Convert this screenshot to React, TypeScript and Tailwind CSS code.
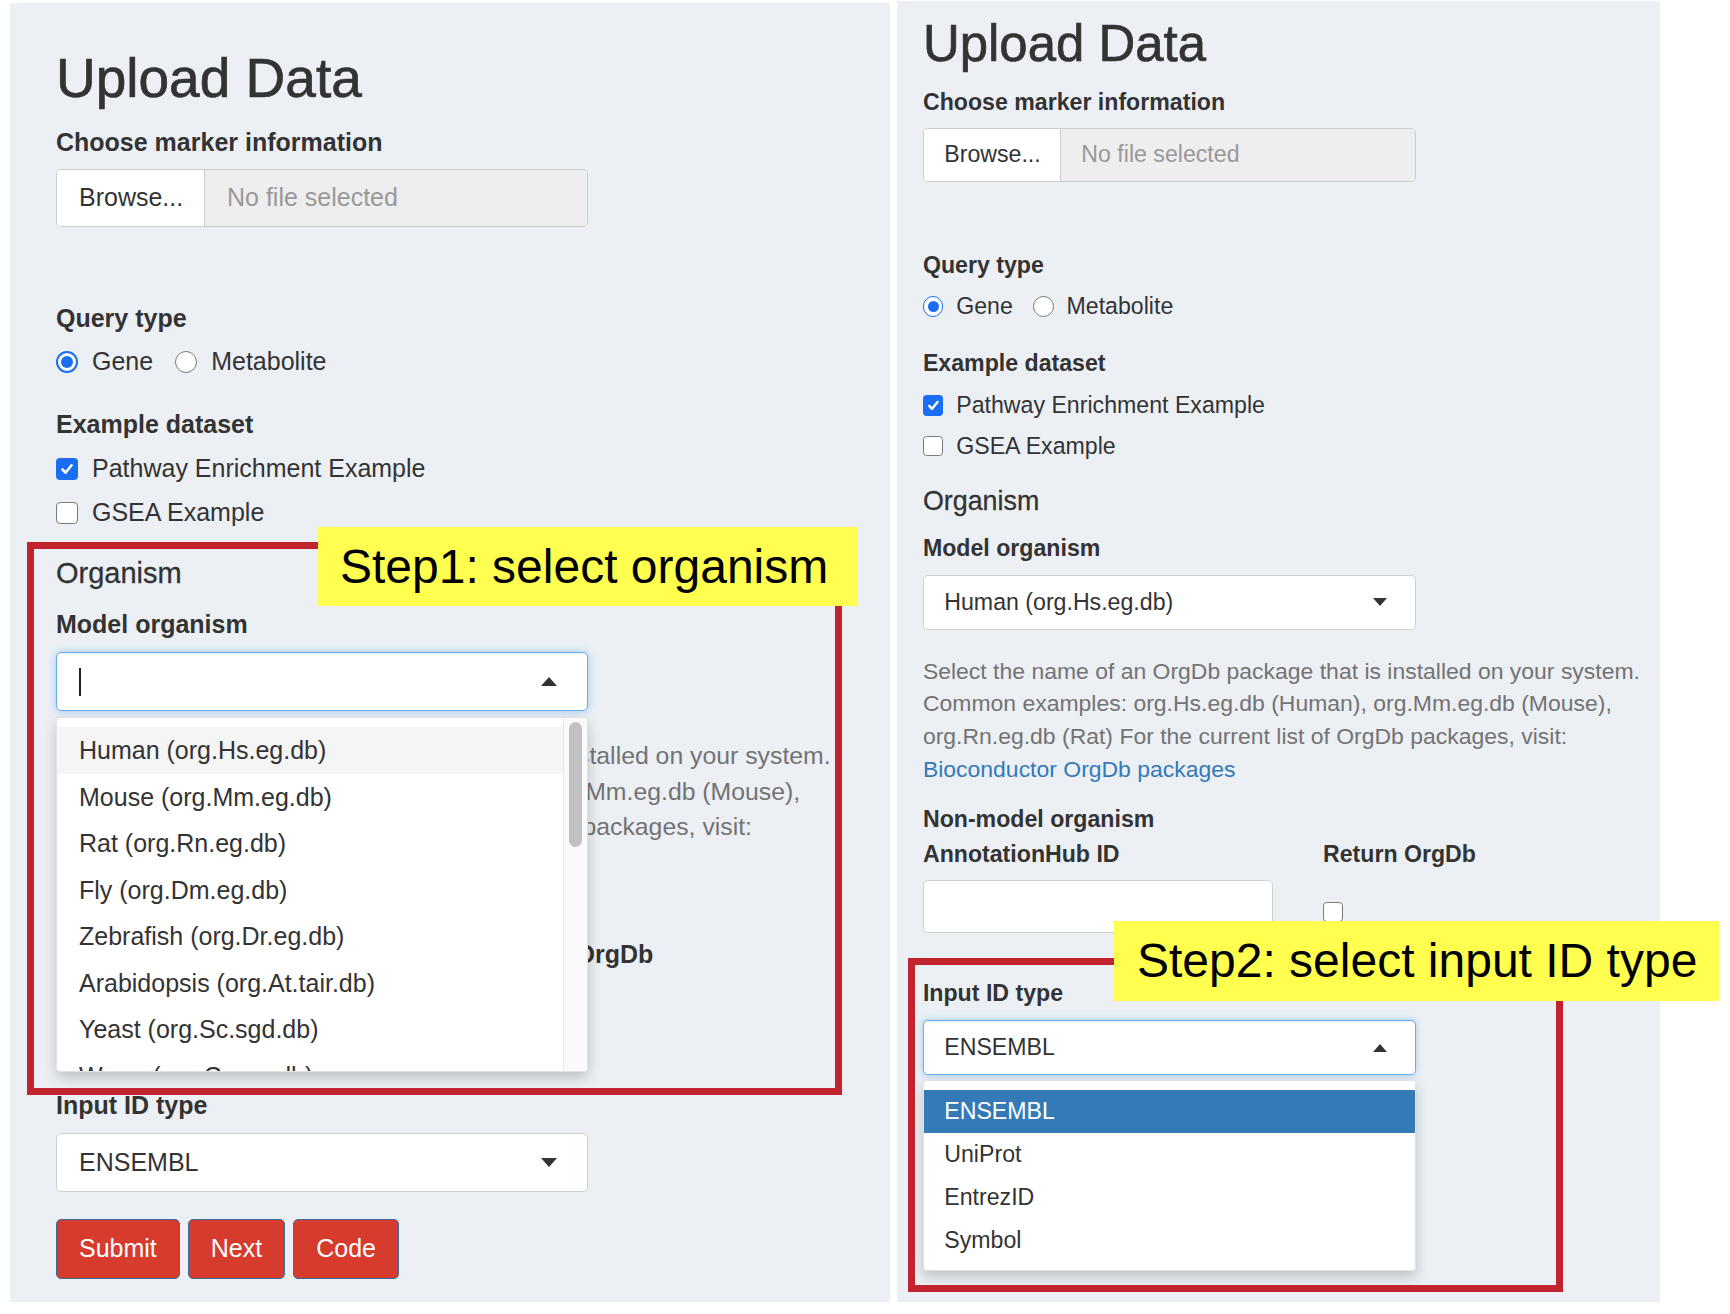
import { ReactNode } from "react";

const ORGANISMS = [
  "Human (org.Hs.eg.db)",
  "Mouse (org.Mm.eg.db)",
  "Rat (org.Rn.eg.db)",
  "Fly (org.Dm.eg.db)",
  "Zebrafish (org.Dr.eg.db)",
  "Arabidopsis (org.At.tair.db)",
  "Yeast (org.Sc.sgd.db)",
  "Worm (org.Ce.eg.db)",
];

const ID_TYPES = ["ENSEMBL", "UniProt", "EntrezID", "Symbol"];

function Label({ children, className = "" }: { children: ReactNode; className?: string }) {
  return (
    <div className={`h-[30px] whitespace-nowrap text-[25px] font-bold leading-[30px] text-[#333] ${className}`}>
      {children}
    </div>
  );
}

function Radio({ on }: { on?: boolean }) {
  if (on) {
    return (
      <span className="flex h-[22px] w-[22px] shrink-0 items-center justify-center rounded-full border-2 border-[#1b6ef3] bg-white">
        <span className="block h-[12px] w-[12px] rounded-full bg-[#1b6ef3]" />
      </span>
    );
  }
  return <span className="block h-[22px] w-[22px] shrink-0 rounded-full border-[1.5px] border-[#7a7a7a] bg-white" />;
}

function Check({ on }: { on?: boolean }) {
  if (on) {
    return (
      <span className="flex h-[22px] w-[22px] shrink-0 items-center justify-center rounded-[4px] bg-[#1b6ef3]">
        <svg viewBox="0 0 16 16" className="h-[16px] w-[16px]">
          <path d="M3.5 8.5l3 3.2 6-7.4" fill="none" stroke="white" strokeWidth="2.6" strokeLinecap="round" strokeLinejoin="round" />
        </svg>
      </span>
    );
  }
  return <span className="block h-[22px] w-[22px] shrink-0 rounded-[4px] border-[1.5px] border-[#7a7a7a] bg-white" />;
}

function Caret({ up }: { up?: boolean }) {
  return up ? (
    <span className="block h-0 w-0 border-x-[8.5px] border-b-[9px] border-x-transparent border-b-[#333]" />
  ) : (
    <span className="block h-0 w-0 border-x-[8.5px] border-t-[9px] border-x-transparent border-t-[#333]" />
  );
}

function SelectBox({ open, children }: { open?: boolean; children: ReactNode }) {
  return (
    <div
      className={`flex h-[59px] w-[532px] items-center justify-between rounded-[5px] border bg-white pl-[22px] pr-[30px] ${
        open
          ? "border-[#66afe9] shadow-[0_0_8px_rgba(102,175,233,0.6),inset_0_1px_1px_rgba(0,0,0,0.075)]"
          : "border-[#cfcfcf]"
      }`}
    >
      {children}
    </div>
  );
}

// organism dropdown, open with scroll track (left screenshot)
function OrganismMenu() {
  return (
    <div className="absolute left-0 top-full z-10 mt-[6px] flex h-[355px] w-[532px] overflow-hidden rounded-[4px] border border-[#e2e2e2] bg-white shadow-[0_6px_14px_rgba(0,0,0,0.2)]">
      <div className="flex-1 pt-[9px]">
        {ORGANISMS.map((o, i) => (
          <div
            key={o}
            className={`h-[46.5px] whitespace-nowrap pl-[22px] text-[25px] leading-[46.5px] text-[#333] ${i === 0 ? "bg-[#f5f5f5]" : ""}`}
          >
            {o}
          </div>
        ))}
      </div>
      <div className="w-[24px] shrink-0 border-l border-[#e8e8e8] bg-[#fafafa] px-[5px] pt-[4px]">
        <div className="h-[125px] w-[13px] rounded-full bg-[#c1c1c1]" />
      </div>
    </div>
  );
}

// input id dropdown, open (right screenshot)
function IdMenu() {
  return (
    <div className="absolute left-0 top-full z-10 mt-[6px] w-[532px] rounded-[4px] border border-[#e2e2e2] bg-white py-[9px] shadow-[0_6px_14px_rgba(0,0,0,0.2)]">
      {ID_TYPES.map((t, i) => (
        <div
          key={t}
          className={`h-[46.5px] pl-[22px] text-[25px] leading-[46.5px] ${i === 0 ? "bg-[#337ab7] text-white" : "text-[#333]"}`}
        >
          {t}
        </div>
      ))}
    </div>
  );
}

function UploadForm({ step }: { step: 1 | 2 }) {
  return (
    <div className="text-[25px] text-[#333]">
      <h1 className="h-[60px] whitespace-nowrap text-[55px] font-normal leading-[60px] text-[#333] [-webkit-text-stroke:0.7px_#333]">
        Upload Data
      </h1>

      <Label className="mt-[19px]">Choose marker information</Label>
      <div className="mt-[12px] flex h-[58px] w-[532px] overflow-hidden rounded-[5px] border border-[#cccccc]">
        <div className="flex w-[148px] items-center border-r border-[#cccccc] bg-white pl-[22px]">Browse...</div>
        <div className="flex flex-1 items-center bg-[#eeeeee] pl-[22px] text-[#999]">No file selected</div>
      </div>

      <Label className="mt-[76px]">Query type</Label>
      <div className="mt-[14px] flex h-[30px] items-center">
        <Radio on />
        <span className="ml-[14px]">Gene</span>
        <span className="ml-[22px] flex">
          <Radio />
        </span>
        <span className="ml-[14px]">Metabolite</span>
      </div>

      <Label className="mt-[32px]">Example dataset</Label>
      <div className="mt-[15px] flex h-[30px] items-center gap-[14px]">
        <Check on />
        <span>Pathway Enrichment Example</span>
      </div>
      <div className="mt-[14px] flex h-[30px] items-center gap-[14px]">
        <Check />
        <span>GSEA Example</span>
      </div>

      <h4 className="mt-[28px] h-[34px] text-[29px] font-normal leading-[34px] [-webkit-text-stroke:0.3px_#333]">Organism</h4>
      <Label className="mt-[19px]">Model organism</Label>
      <div className="relative mt-[13px] w-[532px]">
        {step === 1 ? (
          <SelectBox open>
            <span className="block h-[28px] w-[1.5px] bg-[#222]" />
            <Caret up />
          </SelectBox>
        ) : (
          <SelectBox>
            <span>Human (org.Hs.eg.db)</span>
            <Caret />
          </SelectBox>
        )}
        {step === 1 && <OrganismMenu />}
      </div>

      <div className="mt-[27px] whitespace-nowrap text-[24.8px] leading-[35.5px] text-[#737373]">
        <div>Select the name of an OrgDb package that is installed on your system.</div>
        <div>Common examples: org.Hs.eg.db (Human), org.Mm.eg.db (Mouse),</div>
        <div>org.Rn.eg.db (Rat) For the current list of OrgDb packages, visit:</div>
        <div className="text-[#337ab7]">Bioconductor OrgDb packages</div>
      </div>

      <Label className="mt-[22px]">Non-model organism</Label>
      <div className="mt-[7px] flex">
        <div className="w-[432px]">
          <Label>AnnotationHub ID</Label>
          <div className="mt-[12px] h-[58px] w-[378px] rounded-[5px] border border-[#cfcfcf] bg-white" />
        </div>
        <div>
          <Label>Return OrgDb</Label>
          <div className="mt-[36px] flex">
            <Check />
          </div>
        </div>
      </div>

      <Label className="mt-[51px]">Input ID type</Label>
      <div className="relative mt-[13px] w-[532px]">
        <SelectBox open={step === 2}>
          <span>ENSEMBL</span>
          <Caret up={step === 2} />
        </SelectBox>
        {step === 2 && <IdMenu />}
      </div>

      <div className="mt-[27px] flex gap-[8px]">
        {["Submit", "Next", "Code"].map((b) => (
          <button
            key={b}
            className="h-[60px] rounded-[5px] border-[1.5px] border-[#3a6c9e] bg-[#d63b2e] px-[22px] text-[25px] text-white"
          >
            {b}
          </button>
        ))}
      </div>
    </div>
  );
}

export default function App() {
  return (
    <div className="relative h-[1314px] w-[1730px] overflow-hidden bg-white font-['Liberation_Sans',Arial,Helvetica,sans-serif]">
      <div className="flex items-start pl-[10px]">
        {/* left screenshot */}
        <div className="mt-[3px] h-[1299px] w-[880px] shrink-0 overflow-hidden bg-[#ecf0f5] pl-[46px] pt-[45px]">
          <UploadForm step={1} />
        </div>
        {/* right screenshot, captured at a smaller scale */}
        <div className="ml-[7px] mt-[1px] h-[1301px] w-[763px] shrink-0 overflow-hidden bg-[#ecf0f5]">
          <div className="pl-[28px] pt-[16px] [zoom:0.926]">
            <UploadForm step={2} />
          </div>
        </div>
      </div>

      {/* annotation overlays */}
      <div className="absolute left-[27px] top-[542px] z-20 h-[553px] w-[815px] border-[7px] border-[#c1232f]" />
      <div className="absolute left-[318px] top-[527px] z-30 h-[79px] whitespace-nowrap bg-[#ffff50] pl-[22px] pr-[30px] text-[48px] leading-[79px] text-black">
        Step1: select organism
      </div>
      <div className="absolute left-[908px] top-[958px] z-20 h-[334px] w-[655px] border-[7px] border-[#c1232f]" />
      <div className="absolute left-[1114px] top-[921px] z-30 h-[80px] whitespace-nowrap bg-[#ffff50] pl-[23px] pr-[22px] text-[48px] leading-[80px] text-black">
        Step2: select input ID type
      </div>
    </div>
  );
}
